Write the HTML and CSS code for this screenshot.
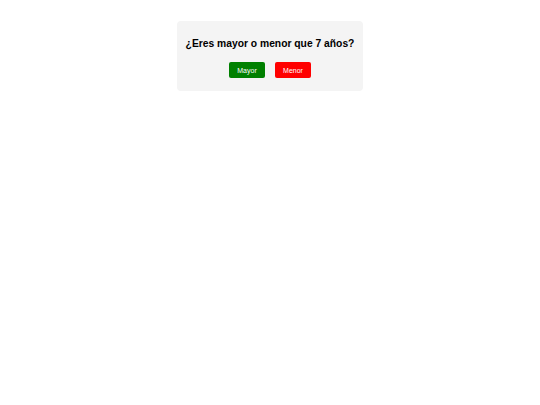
FILE: index.html
```html
<!DOCTYPE html>
<html>
<head>
<meta charset="utf-8">
<link rel="stylesheet" href="styles.css">
</head>
<body>
<div class="page">
  <div class="card">
    <h1 class="title">¿Eres mayor o menor que 7 años?</h1>
    <div class="actions">
      <button class="btn btn-green">Mayor</button>
      <button class="btn btn-red">Menor</button>
    </div>
  </div>
</div>
</body>
</html>
```
FILE: styles.css
```css
html, body {
  margin: 0;
  padding: 0;
  background: #ffffff;
  font-family: "Liberation Sans", Arial, sans-serif;
}
.page {
  display: flex;
  justify-content: center;
  padding-top: 21px;
}
.card {
  background: #f4f4f4;
  border-radius: 4px;
  padding: 16px 9px 13px;
  display: flex;
  flex-direction: column;
  align-items: center;
}
.title {
  margin: 0;
  font-size: 10.3px;
  line-height: 13px;
  font-weight: bold;
  color: #000;
}
.actions {
  display: flex;
  gap: 10px;
  margin-top: 12px;
}
.btn {
  width: 36px;
  height: 16px;
  border: none;
  border-radius: 2px;
  color: #fff;
  font-family: "Liberation Sans", Arial, sans-serif;
  font-size: 7px;
  padding: 0;
}
.btn-green { background: #008000; }
.btn-red { background: #ff0000; }
```
